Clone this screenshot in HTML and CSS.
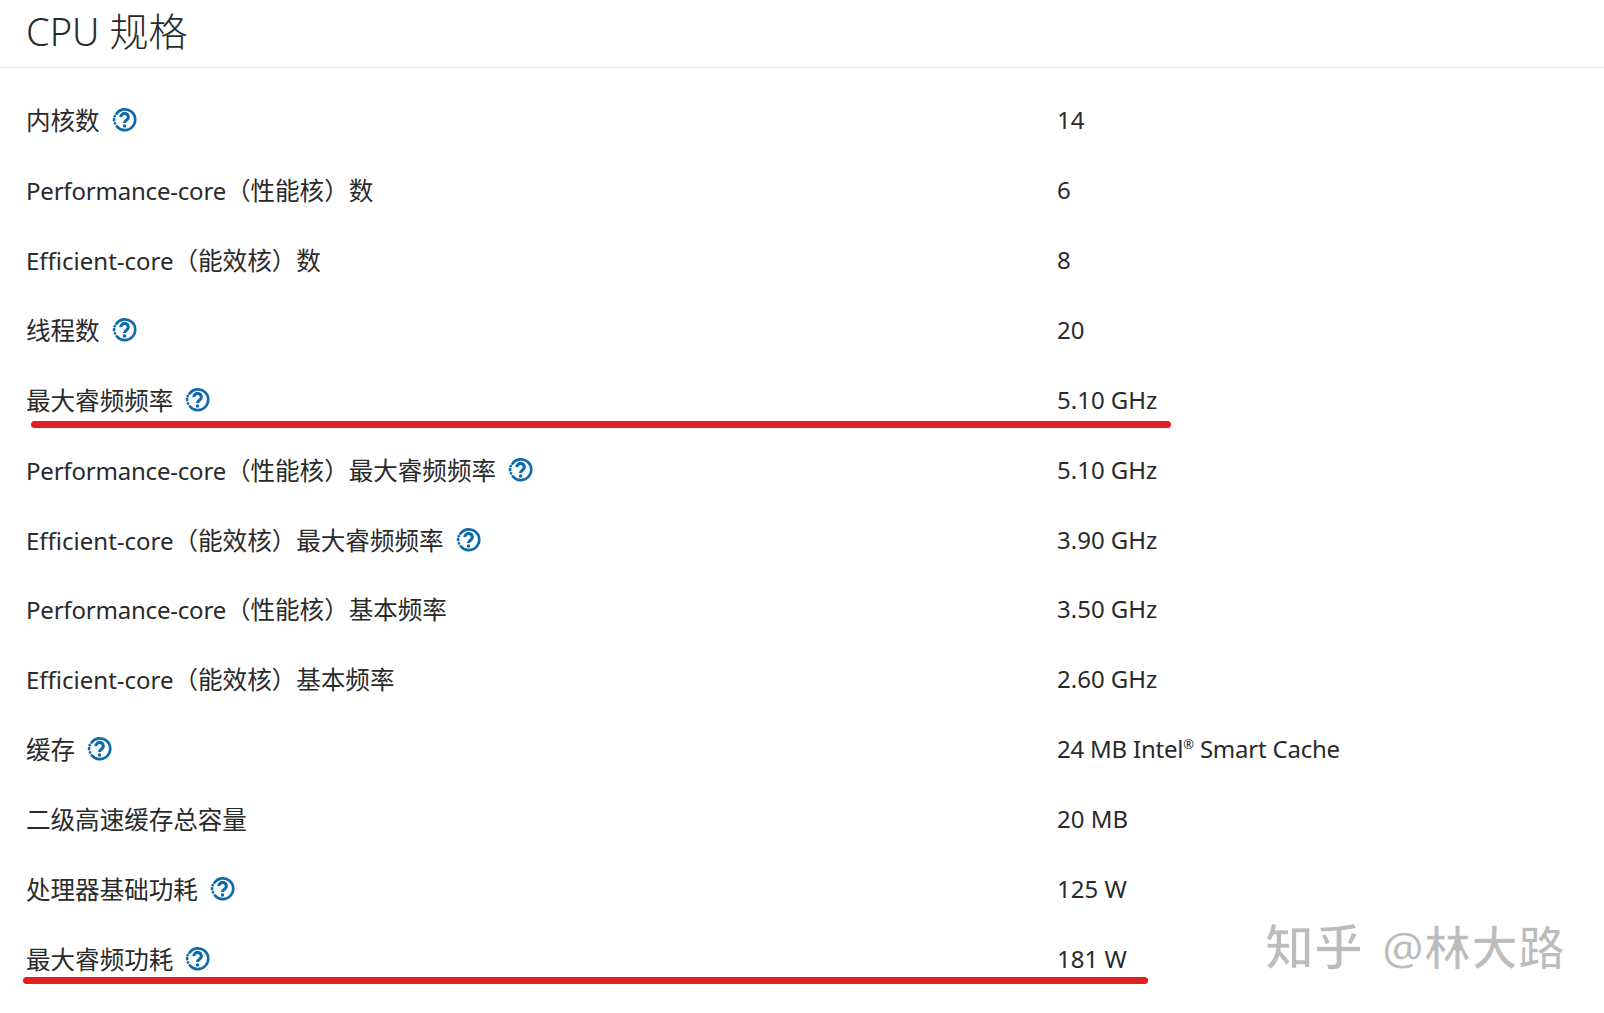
FILE: index.html
```html
<!DOCTYPE html>
<html lang="zh-CN">
<head>
<meta charset="utf-8">
<title>CPU 规格</title>
<link rel="stylesheet" href="styles.css">
</head>
<body>
<svg class="defs" width="0" height="0" aria-hidden="true">
  <symbol id="help" viewBox="0 0 24 24">
    <path class="ring" d="M4.2 6.4A10 10 0 1 1 4.6 18.6"/>
    <path class="ring" d="M2 11.6v1"/>
    <path class="ring" d="M2.9 15.7v.1"/>
    <path class="ring" d="M2.6 8.8v.1"/>
    <path class="mark" d="M8.5 9.8a3.6 3.4 0 1 1 5.8 2.5c-1.4 1-2.3 1.4-2.3 3"/>
    <circle class="dot" cx="12" cy="18.3" r="1.7"/>
  </symbol>
</svg>
<main class="page">
  <h1 class="title">CPU <span class="title-zh">规格</span></h1>
  <div class="specs">
    <div class="row"><div class="label"><span class="text"><span class="zh">内核数</span></span><svg class="help"><use href="#help"/></svg></div><div class="value">14</div></div>
    <div class="row"><div class="label"><span class="text"><span class="perf">Performance-core</span><span class="zh">（性能核）数</span></span></div><div class="value">6</div></div>
    <div class="row"><div class="label"><span class="text">Efficient-core<span class="zh">（能效核）数</span></span></div><div class="value">8</div></div>
    <div class="row"><div class="label"><span class="text"><span class="zh">线程数</span></span><svg class="help"><use href="#help"/></svg></div><div class="value">20</div></div>
    <div class="row"><div class="label"><span class="text"><span class="zh">最大睿频频率</span></span><svg class="help"><use href="#help"/></svg></div><div class="value">5.10 GHz</div></div>
    <div class="row"><div class="label"><span class="text"><span class="perf">Performance-core</span><span class="zh">（性能核）最大睿频频率</span></span><svg class="help"><use href="#help"/></svg></div><div class="value">5.10 GHz</div></div>
    <div class="row"><div class="label"><span class="text">Efficient-core<span class="zh">（能效核）最大睿频频率</span></span><svg class="help"><use href="#help"/></svg></div><div class="value">3.90 GHz</div></div>
    <div class="row"><div class="label"><span class="text"><span class="perf">Performance-core</span><span class="zh">（性能核）基本频率</span></span></div><div class="value">3.50 GHz</div></div>
    <div class="row"><div class="label"><span class="text">Efficient-core<span class="zh">（能效核）基本频率</span></span></div><div class="value">2.60 GHz</div></div>
    <div class="row"><div class="label"><span class="text"><span class="zh">缓存</span></span><svg class="help"><use href="#help"/></svg></div><div class="value value-long">24 MB Intel<sup class="reg">®</sup> Smart Cache</div></div>
    <div class="row"><div class="label"><span class="text"><span class="zh">二级高速缓存总容量</span></span></div><div class="value">20 MB</div></div>
    <div class="row"><div class="label"><span class="text"><span class="zh">处理器基础功耗</span></span><svg class="help"><use href="#help"/></svg></div><div class="value">125 W</div></div>
    <div class="row"><div class="label"><span class="text"><span class="zh">最大睿频功耗</span></span><svg class="help"><use href="#help"/></svg></div><div class="value">181 W</div></div>
  </div>
  <div class="mark-line mark-line-a"></div>
  <div class="mark-line mark-line-b"></div>
  <div class="watermark">知乎 <span class="wm-name">@林大路</span></div>
</main>
</body>
</html>
```
FILE: styles.css
```css
* { box-sizing: border-box; }
html, body { margin: 0; padding: 0; background: #fff; }
body {
  font-family: "Noto Sans", "Noto Sans CJK SC", sans-serif;
  color: #2a2a2a;
  overflow: hidden;
}
.defs { position: absolute; }
.page { position: relative; width: 1604px; height: 1013px; }
.title {
  margin: 0;
  height: 68px;
  padding: 6px 0 0 26px;
  font-size: 38px;
  line-height: 50px;
  font-weight: 300;
  border-bottom: 1px solid #e6e6e6;
}
.title-zh { font-size: 39px; }
.specs { padding-top: 17.3px; }
.row {
  display: grid;
  grid-template-columns: 1057px 1fr;
  height: 69.9px;
  align-items: center;
  font-size: 24px;
  line-height: 32px;
}
.label { display: flex; align-items: center; padding: 2px 0 0 26px; }
.text { white-space: nowrap; }
.zh { font-size: 24.55px; }
.perf { letter-spacing: -0.2px; }
.value { white-space: nowrap; }
.value-long { letter-spacing: -0.22px; }
.reg { font-size: 13px; line-height: 0; vertical-align: 9px; }
.help { width: 25px; height: 25px; margin-left: 12px; margin-top: -3px; flex: none; }
.ring { fill: none; stroke: #0f6cab; stroke-width: 2.5; stroke-linecap: round; }
.mark { fill: none; stroke: #0f6cab; stroke-width: 3; }
.dot { fill: #0f6cab; }
.mark-line { position: absolute; background: #e02021; border-radius: 4px; height: 7px; }
.mark-line-a { left: 31px; top: 421px; width: 1140px; }
.mark-line-b { left: 23px; top: 977px; width: 1125px; }
.watermark {
  position: absolute;
  left: 1265px;
  top: 916px;
  font-size: 49px;
  line-height: 60px;
  font-weight: 700;
  color: #bcbcbc;
  white-space: nowrap;
  word-spacing: 6px;
  -webkit-text-stroke: 1.5px #fff;
}
.wm-name { font-size: 47px; }
```
